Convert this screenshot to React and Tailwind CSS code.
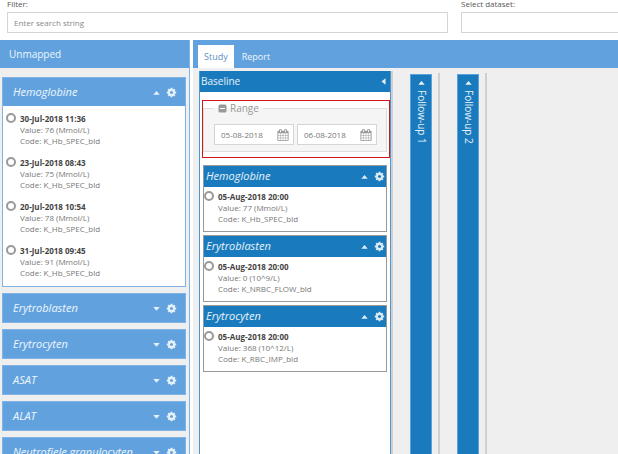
import React, { useState } from 'react';

const unmapped = [
  {
    name: 'Hemoglobine',
    items: [
      { date: '30-Jul-2018 11:36', value: '76 (Mmol/L)', code: 'K_Hb_SPEC_bld' },
      { date: '23-Jul-2018 08:43', value: '75 (Mmol/L)', code: 'K_Hb_SPEC_bld' },
      { date: '20-Jul-2018 10:54', value: '78 (Mmol/L)', code: 'K_Hb_SPEC_bld' },
      { date: '31-Jul-2018 09:45', value: '91 (Mmol/L)', code: 'K_Hb_SPEC_bld' },
    ],
  },
  { name: 'Erytroblasten' },
  { name: 'Erytrocyten' },
  { name: 'ASAT' },
  { name: 'ALAT' },
  { name: 'Neutrofiele granulocyten' },
];

const baseline = [
  { name: 'Hemoglobine', item: { date: '05-Aug-2018 20:00', value: '77 (Mmol/L)', code: 'K_Hb_SPEC_bld' } },
  { name: 'Erytroblasten', item: { date: '05-Aug-2018 20:00', value: '0 (10^9/L)', code: 'K_NRBC_FLOW_bld' } },
  { name: 'Erytrocyten', item: { date: '05-Aug-2018 20:00', value: '368 (10^12/L)', code: 'K_RBC_IMP_bld' } },
];

function CogIcon() {
  return (
    <svg viewBox="0 0 1792 1792" className="w-[11px] h-[11px]" fill="currentColor" aria-hidden="true">
      <path d="M1152 896q0-106-75-181t-181-75-181 75-75 181 75 181 181 75 181-75 75-181zm512-109v222q0 12-8 23t-20 13l-185 28q-19 54-39 91 35 50 107 138 10 12 10 25t-9 23q-27 37-99 108t-94 71q-12 0-26-9l-138-108q-44 23-91 38-16 136-29 186-7 28-36 28h-222q-14 0-24.5-8.5t-11.5-21.5l-28-184q-49-16-90-37l-141 107q-10 9-25 9-14 0-25-11-126-114-165-168-7-10-7-23 0-12 8-23 15-21 51-66.5t54-70.5q-27-50-41-99l-183-27q-13-2-21-12.5t-8-23.5v-222q0-12 8-23t19-13l186-28q14-46 39-92-40-57-107-138-10-12-10-24 0-10 9-23 26-36 98.5-107.5t94.5-71.5q13 0 26 10l138 107q44-23 91-38 16-136 29-186 7-28 36-28h222q14 0 24.5 8.5t11.5 21.5l28 184q49 16 90 37l142-107q9-9 24-9 13 0 25 10 129 119 165 170 7 8 7 22 0 12-8 23-15 21-51 66.5t-54 70.5q26 50 41 98l183 28q13 2 21 12.5t8 23.5z" />
    </svg>
  );
}

function CalendarIcon() {
  return (
    <svg viewBox="0 0 1792 1792" className="w-3 h-3" fill="currentColor" aria-hidden="true">
      <path d="M192 1664h288v-288h-288v288zm352 0h320v-288h-320v288zm-352-352h288v-320h-288v320zm352 0h320v-320h-320v320zm-352-384h288v-288h-288v288zm736 736h320v-288h-320v288zm-384-736h320v-288h-320v288zm768 736h288v-288h-288v288zm-384-352h320v-320h-320v320zm-352-864v-288q0-13-9.5-22.5t-22.5-9.5h-64q-13 0-22.5 9.5t-9.5 22.5v288q0 13 9.5 22.5t22.5 9.5h64q13 0 22.5-9.5t9.5-22.5zm736 864h288v-320h-288v320zm-384-384h320v-288h-320v288zm384 0h288v-288h-288v288zm32-480v-288q0-13-9.5-22.5t-22.5-9.5h-64q-13 0-22.5 9.5t-9.5 22.5v288q0 13 9.5 22.5t22.5 9.5h64q13 0 22.5-9.5t9.5-22.5zm384-64v1280q0 52-38 90t-90 38h-1408q-52 0-90-38t-38-90v-1280q0-52 38-90t90-38h128v-96q0-66 47-113t113-47h64q66 0 113 47t47 113v96h384v-96q0-66 47-113t113-47h64q66 0 113 47t47 113v96h128q52 0 90 38t38 90z" />
    </svg>
  );
}

function MinusSquareIcon() {
  return (
    <svg viewBox="0 0 9 9" className="w-[9px] h-[9px]" aria-hidden="true">
      <rect x="0.5" y="0.5" width="8" height="8" rx="1.5" fill="#999" />
      <rect x="2" y="4" width="5" height="1" fill="#fff" />
    </svg>
  );
}

function Caret({ direction }) {
  const shapes = {
    up: '0.3,5.7 3.5,2 6.7,5.7',
    down: '0.3,2 6.7,2 3.5,5.7',
    left: '5.5,0.3 5.5,6.7 1.5,3.5',
  };
  return (
    <svg viewBox="0 0 7 7" className="w-[7px] h-[7px]" fill="currentColor" aria-hidden="true">
      <polygon points={shapes[direction]} />
    </svg>
  );
}

function HeaderButtons({ name, open, onToggle }) {
  return (
    <div className="flex items-center gap-1.5 text-white/85 shrink-0">
      <button type="button" aria-label={`Toggle ${name}`} aria-expanded={open} onClick={onToggle}>
        <Caret direction={open ? 'up' : 'down'} />
      </button>
      <button type="button" aria-label={`Settings ${name}`}>
        <CogIcon />
      </button>
    </div>
  );
}

function Measurement({ item, group }) {
  return (
    <label className="flex items-start gap-1 leading-[11px]">
      <input
        type="radio"
        name={group}
        className="appearance-none w-2.5 h-2.5 rounded-full border-2 border-[#999] checked:bg-[#197bbd] bg-white shrink-0"
      />
      <span className="text-[8px] text-[#777]">
        <span className="block font-bold text-[#444]">{item.date}</span>
        <span className="block">Value: {item.value}</span>
        <span className="block">Code: {item.code}</span>
      </span>
    </label>
  );
}

function UnmappedCard({ group }) {
  const [open, setOpen] = useState(Boolean(group.items));
  return (
    <section className="border border-[#7fb4e4] bg-white shrink-0">
      <div className="flex items-center justify-between h-7 pl-2.5 pr-2 bg-[#61a2de] text-white/90">
        <h3 className="text-[11px] italic whitespace-nowrap">{group.name}</h3>
        <HeaderButtons name={group.name} open={open} onToggle={() => setOpen(!open)} />
      </div>
      {open && group.items && (
        <div className="flex flex-col gap-[11px] pl-[3px] pt-[7px] pb-2">
          {group.items.map((item) => (
            <Measurement key={item.date} item={item} group="unmapped" />
          ))}
        </div>
      )}
    </section>
  );
}

function BaselineCard({ group }) {
  const [open, setOpen] = useState(true);
  return (
    <section className="border border-[#999] bg-white">
      <div className="flex items-center justify-between h-[21px] pl-0.5 pr-px bg-[#197bbd] text-white/90">
        <h3 className="text-[11px] italic">{group.name}</h3>
        <HeaderButtons name={group.name} open={open} onToggle={() => setOpen(!open)} />
      </div>
      {open && (
        <div className="pt-1 pb-[7px]">
          <Measurement item={group.item} group="baseline" />
        </div>
      )}
    </section>
  );
}

function DateField({ label, initial }) {
  const [value, setValue] = useState(initial);
  return (
    <div className="flex items-center flex-1 min-w-0 h-[21px] pl-1.5 pr-1 border border-[#d5d5d5] bg-white text-[#999]">
      <input
        type="text"
        aria-label={label}
        value={value}
        onChange={(e) => setValue(e.target.value)}
        className="w-full min-w-0 text-[8px] text-[#777] outline-none"
      />
      <button type="button" aria-label={`Open calendar ${label}`} className="shrink-0">
        <CalendarIcon />
      </button>
    </div>
  );
}

function CollapsedVisit({ name }) {
  return (
    <div className="flex pr-1.5 pt-px border-r-2 border-[#d0d0d0]">
      <button
        type="button"
        className="flex items-start w-[22px] pt-1 bg-[#197bbd] border border-[#5ba3dc] border-b-0 text-white/90 text-[10px] [writing-mode:vertical-rl]"
      >
        <span className="flex items-center gap-1 w-full">
          <Caret direction="up" />
          {name}
        </span>
      </button>
    </div>
  );
}

export default function App() {
  const [filter, setFilter] = useState('');
  const [tab, setTab] = useState('Study');

  return (
    <div className="flex flex-col h-screen overflow-hidden bg-white font-['Open_Sans',sans-serif] text-[#555]">
      {/* Filter bar */}
      <div className="grid grid-cols-[441fr_157fr] gap-[13px] pl-[7px] pb-[7px] shrink-0 text-[8px]">
        <div className="flex flex-col gap-1">
          <label htmlFor="filter" className="leading-2">Filter:</label>
          <input
            id="filter"
            type="text"
            placeholder="Enter search string"
            value={filter}
            onChange={(e) => setFilter(e.target.value)}
            className="h-[21px] px-1.5 border border-[#d5d5d5] outline-none placeholder:text-[#888]"
          />
        </div>
        <div className="flex flex-col gap-1">
          <label htmlFor="dataset" className="leading-2">Select dataset:</label>
          <select id="dataset" className="appearance-none h-[21px] px-1.5 border border-r-0 border-[#d5d5d5] bg-white outline-none" />
        </div>
      </div>

      <div className="flex flex-1 min-h-0 gap-[3px]">
        {/* Unmapped */}
        <aside className="flex flex-col w-[190px] shrink-0 border-r border-[#7fb4e4] bg-[#efefef]">
          <h2 className="flex items-center h-7 px-[9px] shrink-0 bg-[#61a2de] text-white/90 text-[10px]">Unmapped</h2>
          <div className="flex flex-col flex-1 min-h-0 overflow-hidden gap-1.5 pt-[9px] pl-0.5 pr-[3px]">
            {unmapped.map((group) => (
              <UnmappedCard key={group.name} group={group} />
            ))}
          </div>
        </aside>

        <main className="flex flex-col flex-1 min-w-0 bg-[#efefef]">
          <div role="tablist" className="flex items-end h-7 pl-[5px] shrink-0 bg-[#61a2de] text-[9px]">
            {['Study', 'Report'].map((name) => (
              <button
                key={name}
                type="button"
                role="tab"
                aria-selected={tab === name}
                onClick={() => setTab(name)}
                className={`h-[23px] ${tab === name ? 'px-1.5 bg-white text-[#5a8fc4]' : 'px-2 text-white/90'}`}
              >
                {name}
              </button>
            ))}
          </div>

          <div className="flex flex-1 min-h-0 pl-1.5 pt-[3px]">
            {/* Baseline */}
            <section className="w-[194px] shrink-0 border-r-2 border-[#d0d0d0]">
              <div className="h-full border-x border-[#4a97d2] bg-white">
                <div className="flex items-center justify-between h-[21px] pl-px pr-[3px] bg-[#197bbd] text-white/90">
                  <h2 className="text-[10px]">Baseline</h2>
                  <button type="button" aria-label="Collapse Baseline">
                    <Caret direction="left" />
                  </button>
                </div>
                <div className="mt-2 ml-0.5 border border-[#d4141c] bg-white pb-[5px] pr-0.5">
                  <fieldset className="border border-[#ddd] bg-[#f5f5f5] pl-2.5 pr-[9px] pt-[9px] pb-1.5">
                    <legend className="px-1 text-[10px] leading-[14px] text-[#999]">
                      <button type="button" className="flex items-center gap-[3px]">
                        <MinusSquareIcon />
                        Range
                      </button>
                    </legend>
                    <div className="flex gap-[3px]">
                      <DateField label="From" initial="05-08-2018" />
                      <DateField label="To" initial="06-08-2018" />
                    </div>
                  </fieldset>
                </div>
                <div className="flex flex-col gap-[3px] pt-[7px] pl-[3px] pr-[3px]">
                  {baseline.map((group) => (
                    <BaselineCard key={group.name} group={group} />
                  ))}
                </div>
              </div>
            </section>

            {/* Collapsed visits */}
            <div className="flex gap-[17px] pl-[17px] pt-0.5">
              <CollapsedVisit name="Follow-up 1" />
              <CollapsedVisit name="Follow-up 2" />
            </div>
          </div>
        </main>
      </div>
    </div>
  );
}
